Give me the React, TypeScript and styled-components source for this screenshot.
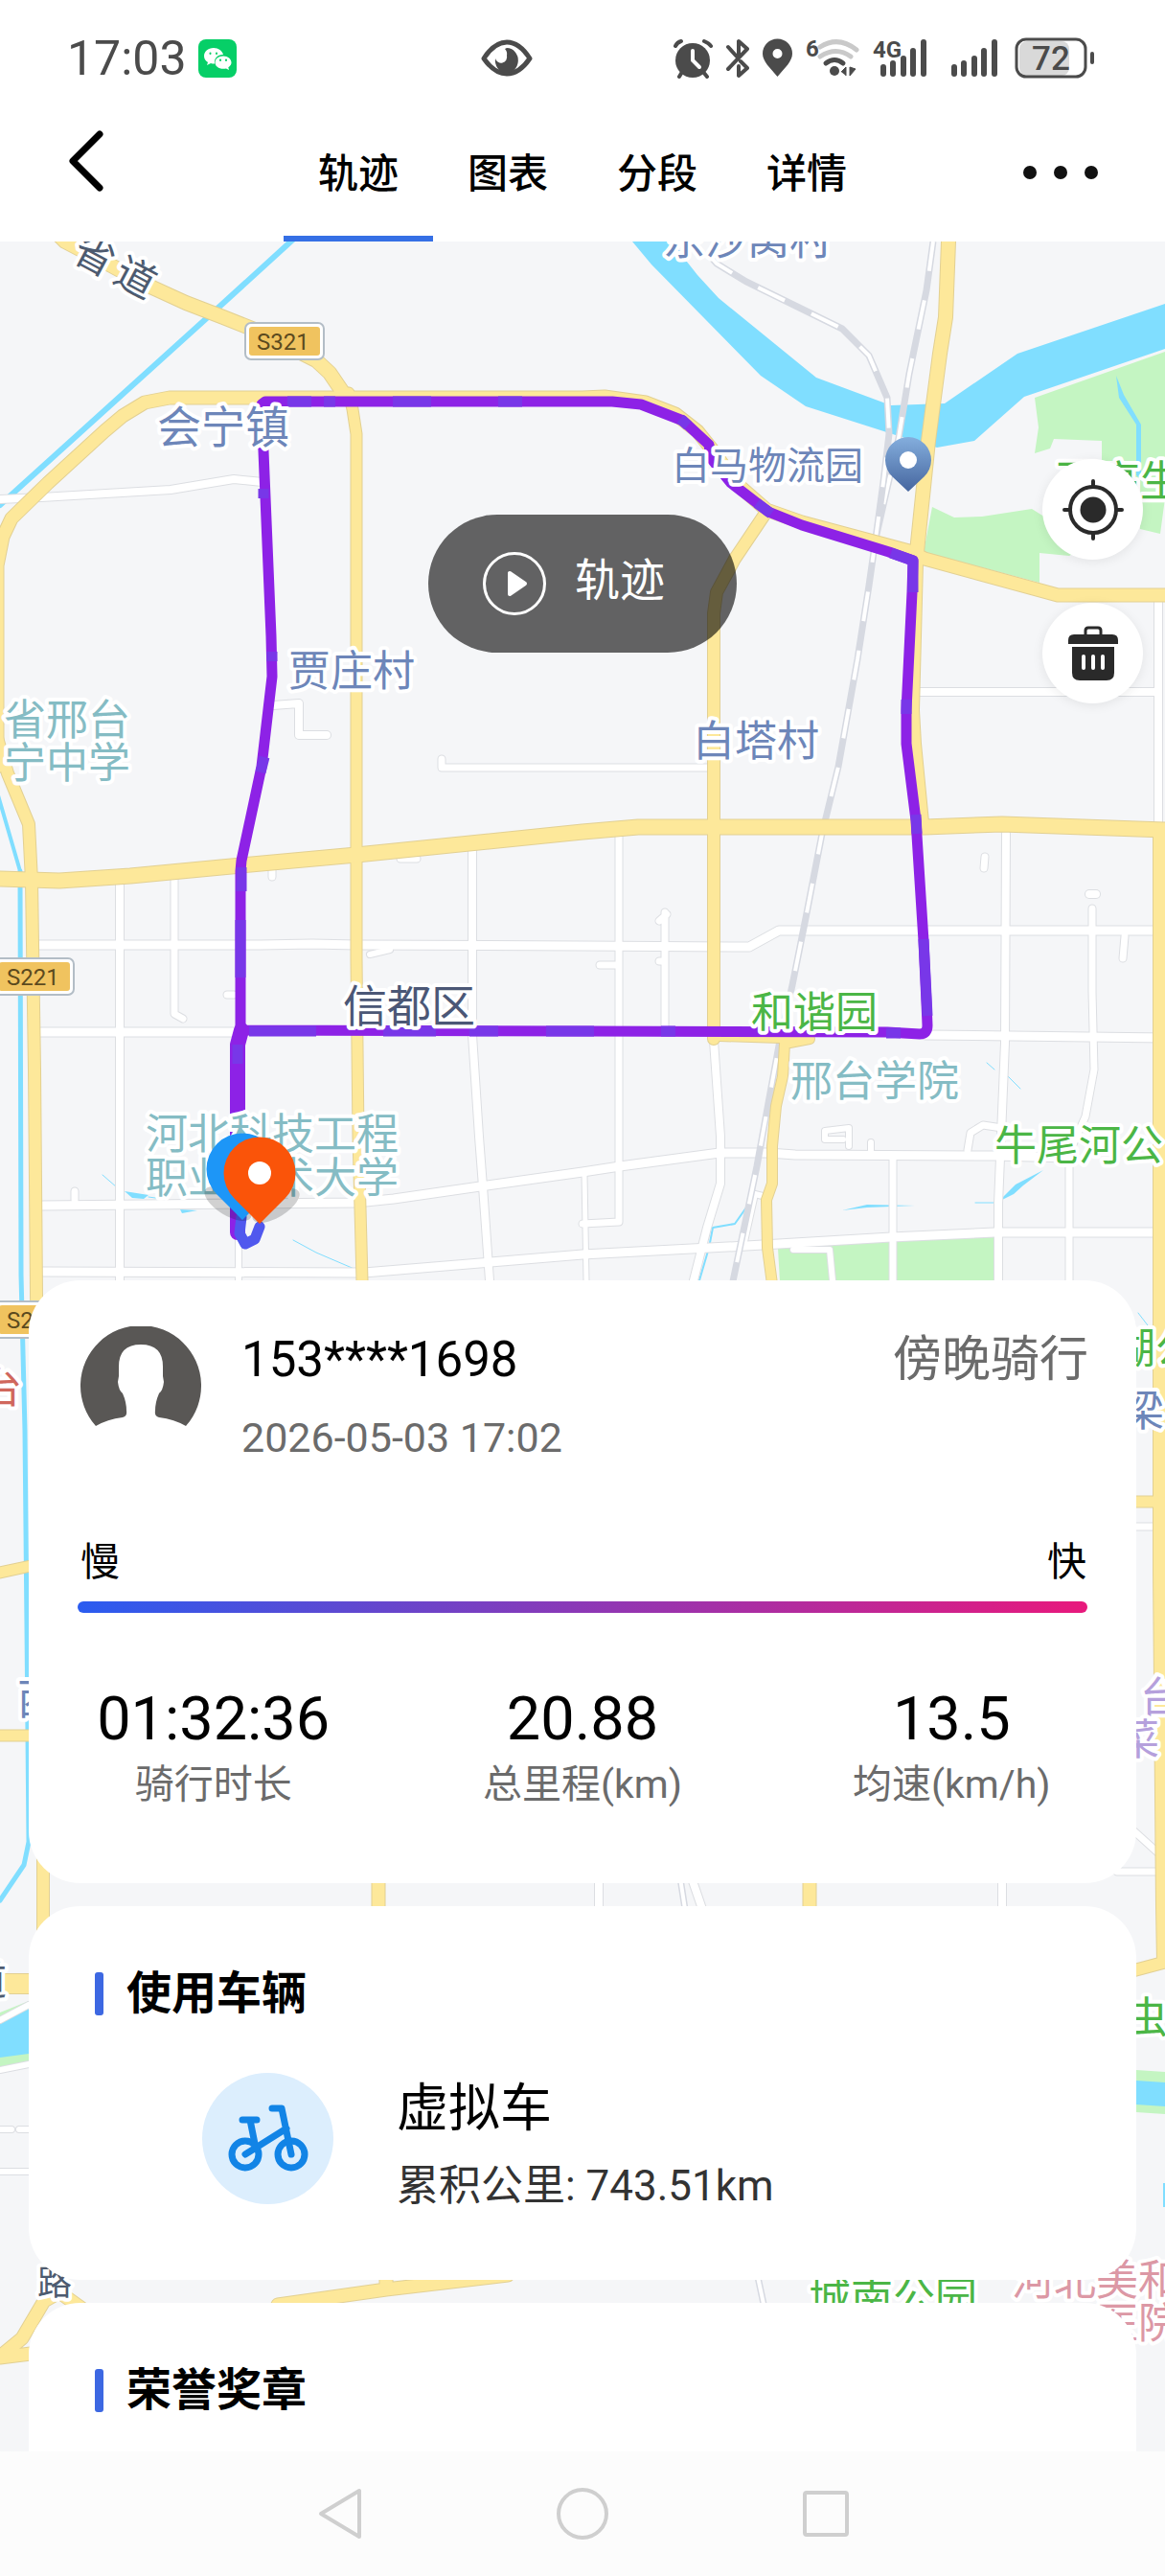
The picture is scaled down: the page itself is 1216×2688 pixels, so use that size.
import { useState } from "react";
import styled, { createGlobalStyle } from "styled-components";

const FONT = `Roboto, "Noto Sans CJK SC", sans-serif`;

const tabs = ["轨迹", "图表", "分段", "详情"];

const stats = [
  { value: "01:32:36", label: "骑行时长" },
  { value: "20.88", label: "总里程(km)" },
  { value: "13.5", label: "均速(km/h)" },
];

type Line = { d: string; w: number };

// 普通道路
const streets: Line[] = [
  { d: "M0 521L43 519L178 511L244 500L274 503", w: 8 },
  { d: "M285 736L312 734V767H341", w: 8 },
  { d: "M461 792V801H740", w: 7 },
  { d: "M125 919V1336", w: 8 },
  { d: "M182 914V1058L191 1063", w: 7 },
  { d: "M493 886V1080L500 1186L504 1238L511 1336", w: 8 },
  { d: "M41 986H272L326 985L372 986L608 987L782 988L813 971H1205", w: 9 },
  { d: "M41 1077H250", w: 9 },
  { d: "M43 1258L372 1255L411 1251L508 1237L608 1223L647 1217L751 1203H802L830 1205L1038 1206L1116 1208", w: 9 },
  { d: "M45 1327L380 1328L512 1317L608 1309L779 1300L930 1291L1038 1286L1205 1286", w: 9 },
  { d: "M249 1291V1336", w: 6 },
  { d: "M646 872V1275L608 1277", w: 7 },
  { d: "M694 952V1074M696 954L688 961M694 1003H688", w: 7 },
  { d: "M745 1086L752 1186V1235L738 1281L724 1336", w: 8 },
  { d: "M610 1226L612 1336", w: 5 },
  { d: "M1050 870L1049 1088L1046 1160L1042 1256V1336", w: 8 },
  { d: "M966 1080L1216 1083", w: 9 },
  { d: "M1140 948V1035L1142 1116L1133 1165L1116 1203V1336", w: 7 },
  { d: "M1137 933H1144", w: 8 },
  { d: "M932 1209V1336", w: 7 },
  { d: "M1209 629V858", w: 8 },
  { d: "M953 722H1205", w: 8 },
  { d: "M1174 977L1172 1000", w: 7 },
  { d: "M886 1196V1177L861 1180V1189H880M909 1192V1200", w: 6 },
  { d: "M1010 1200L1013 1182L1026 1174L1046 1177", w: 7 },
  { d: "M284 907V915M1028 894L1027 906M418 896H435M78 1252V1243M237 1038H244M626 1007H644", w: 7 },
  { d: "M386 996L407 991M828 1304H866L869 1336M776 1300L788 1246L796 1248", w: 6 },
  { d: "M625 1960V1992M722 1960L733 1992M1046 1960V1992", w: 8 },
  { d: "M1184 1911L1216 1940M1166 1953H1216M1186 1593H1212", w: 7 },
  { d: "M0 2108L30 2092M0 2160L30 2154M0 2222H12M20 2222H30M0 2266H30", w: 6 },
];

// 省道与主干道
const mainRoads: Line[] = [
  { d: "M60 244L68 252L116 277L159 300L194 316L233 331L268 345L330 376L344 389L361 414", w: 14 },
  { d: "M-3 800V590L3 560L12 541L50 504L109 450L128 434L151 420L177 415H608L631 414L674 420L705 432L728 450L744 470L767 503L800 532L837 545L949 575L965 583L1104 621H1216", w: 13 },
  { d: "M364 410L368 427L372 453V1000L374 1186L378 1336", w: 11 },
  { d: "M-3 770L8 807L30 860L33 919L36 1116L38 1350L45 1942V2040", w: 12 },
  { d: "M0 917L62 919L136 914L252 903L372 892L608 868L666 863H965L1046 860L1216 866", w: 15 },
  { d: "M800 534L767 583L748 618L745 640V1084", w: 12 },
  { d: "M990 252L987 331L981 369L969 460L958 566L956 587L952 741L954 776L962 858", w: 14 },
  { d: "M1210 866V1640L1213 1989L1214 2048L1184 2056", w: 12 },
  { d: "M751 1081L845 1084L819 1089L817 1123L810 1154L806 1196V1235L800 1252L801 1302L806 1340", w: 10 },
  { d: "M0 1641L32 1634M0 1811H32M1184 1567H1212", w: 11 },
  { d: "M6 2070H32", w: 20 },
  { d: "M395 1950V2000M845 1950V2000M403 2360V2389M290 2405L403 2389L530 2374M0 2459L23 2440L46 2401L62 2392L90 2412M0 2460L32 2456", w: 13 },
];

const river =
  "M660 252L680 276L794 392L841 424L938 455L978 467L1017 460L1069 414L1216 364V317L1062 369L986 421L930 423L852 394L750 311L728 287L713 268L704 252Z";

const parks = [
  "M1080 415L1216 367V520L1211 557L1190 552V500L1150 480V460L1100 458L1096 468L1080 473L1084 446Z",
  "M973 529L996 540L1025 539L1077 531L1093 541L1150 560L1116 580L1085 577V608L964 576Z",
  "M812 1303L1038 1289V1337H814Z",
  "M0 2100L30 2088V2152L0 2158Z",
  "M1186 2160L1216 2162V2206L1186 2204Z",
];

const waters = [
  river,
  "M1165 392L1168 415L1186 443V496L1191 500V443L1173 412Z",
  "M0 2112L30 2096V2143L0 2147Z",
  "M1186 2171L1216 2173V2198L1186 2196Z",
  "M1214 2278H1216V2303H1214Z",
  "M1089 1221L1060 1236L1042 1254L1058 1246L1068 1237Z",
  "M879 1263L905 1257L955 1258L905 1260Z",
  "M130 1243L155 1247L150 1251L138 1250Z",
  "M188 1262L206 1263L190 1266Z",
];

const creeks: Line[] = [
  { d: "M308 248L229 320L0 527", w: 6 },
  { d: "M-2 830L21 909", w: 4 },
  { d: "M21 909L22 1330L26 1493L28 1697L30 1922L25 1946L0 1983", w: 5 },
  { d: "M779 1260L767 1277L744 1281L740 1302L730 1336", w: 2 },
  { d: "M107 1226L122 1239M306 1294L330 1307L372 1325M1030 1109L1038 1116M1052 1123L1065 1136M155 1249L176 1252", w: 1 },
  { d: "M1198 1383L1188 1370M1018 1255H1042", w: 1 },
];

const rails = [
  "M974 252L967 303L949 390L938 457L914 562L907 611L895 688L875 800L858 870L841 958L827 1028L813 1091L802 1151L790 1217L779 1270L765 1337",
  "M740 266L748 275L779 294L879 343L907 371L926 415L928 453L922 503L914 562",
  "M710 1960L715 1992M791 2376L797 2404",
];

const ride =
  "M251 1075V909L252 898L273 800L284 706L283 664L276 495L273 422L277 419L639 419L669 422L713 439L740 464L742 478L763 504L802 534L837 548L928 576L953 585L952 618L946 741V776L956 856L964 982L967 1046L968 1070Q968 1079 960 1079L926 1077L608 1076L256 1075";

// 速度变慢的路段
const slowParts =
  "M300 419H325M338 419H350M410 419H450M520 419H545M275 510V520M284 680V690M276 790L272 806M252 905V930M251 960V1020M260 1076H330M400 1076H455M490 1076H520M570 1076H620M690 1076H705M710 437L718 444M790 525L805 536M930 577L953 585V618M946 730V745M956 850L957 870M964 980L968 1060M248 1090V1110M940 1078H925";

const LABEL = {
  village: "#6d86b9",
  school: "#85bcc4",
  park: "#4bb646",
  road: "#4d5b70",
  district: "#4b5776",
  red: "#d0675c",
  hospital: "#dc98a5",
  purple: "#b5a0dc",
};

const labels: { text: string; x: number; y: number; size: number; color: string; rotate?: number }[] = [
  { text: "省", x: 73, y: 270, size: 42, color: LABEL.road, rotate: 28 },
  { text: "道", x: 116, y: 293, size: 42, color: LABEL.road, rotate: 28 },
  { text: "会宁镇", x: 164, y: 462, size: 46, color: LABEL.village },
  { text: "贾庄村", x: 301, y: 716, size: 44, color: LABEL.village },
  { text: "省邢台", x: 4, y: 767, size: 44, color: LABEL.school },
  { text: "宁中学", x: 4, y: 812, size: 44, color: LABEL.school },
  { text: "东沙窝村", x: 692, y: 266, size: 44, color: LABEL.village },
  { text: "白马物流园", x: 701, y: 500, size: 40, color: LABEL.village },
  { text: "白塔村", x: 723, y: 789, size: 44, color: LABEL.village },
  { text: "百高生", x: 1102, y: 518, size: 44, color: LABEL.park },
  { text: "信都区", x: 358, y: 1066, size: 46, color: LABEL.district },
  { text: "和谐园", x: 784, y: 1072, size: 44, color: LABEL.park },
  { text: "邢台学院", x: 825, y: 1144, size: 44, color: LABEL.school },
  { text: "牛尾河公", x: 1038, y: 1211, size: 44, color: LABEL.park },
  { text: "河北科技工程", x: 152, y: 1199, size: 44, color: LABEL.school },
  { text: "职业技术大学", x: 152, y: 1245, size: 44, color: LABEL.school },
  { text: "台", x: -21, y: 1464, size: 44, color: LABEL.red },
  { text: "西", x: 18, y: 1789, size: 44, color: LABEL.village },
  { text: "湖公", x: 1162, y: 1423, size: 44, color: LABEL.park },
  { text: "梁", x: 1171, y: 1488, size: 44, color: LABEL.village },
  { text: "台", x: 1190, y: 1787, size: 44, color: LABEL.purple },
  { text: "菜", x: 1166, y: 1831, size: 44, color: LABEL.purple },
  { text: "道", x: -35, y: 2082, size: 42, color: LABEL.road },
  { text: "虫", x: 1175, y: 2121, size: 44, color: LABEL.park },
  { text: "路", x: 39, y: 2395, size: 36, color: LABEL.road },
  { text: "城南公园", x: 844, y: 2414, size: 44, color: LABEL.park },
  { text: "河北美和", x: 1056, y: 2395, size: 44, color: LABEL.hospital },
  { text: "医院", x: 1144, y: 2440, size: 44, color: LABEL.hospital },
];

const shields = [
  { text: "S321", x: 256, y: 337, textX: 268 },
  { text: "S221", x: -5, y: 1000, textX: 7 },
  { text: "S222", x: -5, y: 1358, textX: 7 },
];

const RideMap = () => (
  <MapSvg viewBox="0 252 1216 2306" preserveAspectRatio="xMidYMin slice" aria-label="骑行轨迹地图">
    <defs>
      <linearGradient id="poi" x1="0" y1="0" x2="0" y2="1">
        <stop offset="0" stopColor="#84aedd" />
        <stop offset="1" stopColor="#46669f" />
      </linearGradient>
    </defs>
    <rect y="252" width="1216" height="2306" fill="#f5f6f8" />
    {parks.map((d) => (
      <path key={d} d={d} fill="#c4f5c2" />
    ))}
    {waters.map((d) => (
      <path key={d} d={d} fill="#80deff" />
    ))}
    <Lines stroke="#80deff">
      {creeks.map(({ d, w }) => (
        <path key={d} d={d} strokeWidth={w} />
      ))}
    </Lines>
    <Lines stroke="#dcdee2">
      {streets.map(({ d, w }) => (
        <path key={d} d={d} strokeWidth={w + 2} />
      ))}
    </Lines>
    <Lines stroke="#fff">
      {streets.map(({ d, w }) => (
        <path key={d} d={d} strokeWidth={w} />
      ))}
    </Lines>
    {/* 铁路 */}
    {rails.map((d) => (
      <g key={d} fill="none">
        <path d={d} stroke="#d6d9e1" strokeWidth="7" />
        <path d={d} stroke="#fff" strokeWidth="4" strokeDasharray="31 31" />
      </g>
    ))}
    <Lines stroke="#e2d093">
      {mainRoads.map(({ d, w }) => (
        <path key={d} d={d} strokeWidth={w + 2} />
      ))}
    </Lines>
    <Lines stroke="#fde89a">
      {mainRoads.map(({ d, w }) => (
        <path key={d} d={d} strokeWidth={w} />
      ))}
    </Lines>
    {/* 骑行轨迹 */}
    <Lines stroke="#8d22e6">
      <path d={ride} strokeWidth="11" />
      <path d="M252 1075L248 1090V1286" strokeWidth="16" />
      <path d={slowParts} stroke="#7837e8" strokeWidth="11" strokeLinecap="butt" />
      <path d="M252 1270L250 1287L256 1298L266 1293L271 1280" stroke="#5058ee" strokeWidth="11" />
    </Lines>
    {shields.map(({ text, x, y, textX }) => (
      <g key={text}>
        <rect x={x} y={y} width="82" height="38" rx="6" fill="#fff" stroke="#b3bdc6" strokeWidth="2" />
        <rect x={x + 4} y={y + 4} width="74" height="30" rx="3" fill="#f0c35f" />
        <ShieldText x={textX} y={y + 28}>
          {text}
        </ShieldText>
      </g>
    ))}
    {labels.map(({ text, x, y, size, color, rotate }) => (
      <MapLabel
        key={`${text}${y}`}
        x={x}
        y={y}
        fontSize={size}
        fill={color}
        transform={rotate ? `rotate(${rotate} ${x} ${y})` : undefined}
      >
        {text}
      </MapLabel>
    ))}
    <g transform="translate(948 480)">
      <path d="M0 33L-16.5 17.5A24 24 0 1 1 16.5 17.5Z" fill="url(#poi)" />
      <circle r="9" fill="#fff" />
    </g>
    {/* 起点、终点 */}
    <ellipse cx="238" cy="1256" rx="28" ry="12" fill="#000" opacity=".18" transform="rotate(32 238 1256)" />
    <ellipse cx="288" cy="1258" rx="28" ry="12" fill="#000" opacity=".18" transform="rotate(-32 288 1258)" />
    <path transform="translate(253 1220)" d="M0 53L-26.5 26.5A37.5 37.5 0 1 1 26.5 26.5Z" fill="#1d96f7" />
    <g transform="translate(271 1224)">
      <path d="M0 53L-26.5 26.5A37.5 37.5 0 1 1 26.5 26.5Z" fill="#fa5409" />
      <circle r="12" fill="#fff" />
    </g>
  </MapSvg>
);

const SignalBars = ({ label }: { label?: string }) => (
  <svg width="60" height="44" viewBox="0 0 60 44">
    {label && (
      <SignalText x="0" y="21">
        {label}
      </SignalText>
    )}
    <path d="M11 31V38M21 27V38M32 22V38M42 14V38M53 5V38" stroke="#4b4b4b" strokeWidth="6" strokeLinecap="round" />
  </svg>
);

const StatusIcons = () => (
  <StatusRight>
    <svg width="41" height="44" viewBox="0 0 41 44" fill="none" stroke="#4b4b4b" strokeLinecap="round">
      <circle cx="20" cy="24" r="18" fill="#4b4b4b" stroke="none" />
      <path d="M2 9Q4 5 8 4M32 4Q37 6 39 9M9 36L6 41M31 36L35 41" strokeWidth="4" />
      <path d="M20 14V24L27 31" stroke="#fff" strokeWidth="4" />
    </svg>
    <svg width="24" height="44" viewBox="1 0 24 44" fill="none" stroke="#4b4b4b" strokeWidth="4" strokeLinecap="round" strokeLinejoin="round">
      <path d="M3 10L12 20M3 33L23 12L14 4V18M16 25L23 32L14 40V30" />
    </svg>
    <svg width="31" height="44" viewBox="0 0 31 44">
      <path fillRule="evenodd" fill="#4b4b4b" d="M15.500 41C8 32 0 25 0 17a15.500 15.500 0 0 1 31 0C31 25 23 32 15.500 41ZM15.500 22a5 5 0 1 0 0-10a5 5 0 0 0 0 10Z" />
    </svg>
    <svg width="56" height="44" viewBox="0 0 56 44" fill="none" strokeLinecap="round">
      <SignalText x="0" y="20">
        6
      </SignalText>
      <path d="M15 10Q34 -2 53 13M15 20Q32 9 47 20" stroke="#c9c9c9" strokeWidth="5" />
      <path d="M21 27Q30 20 39 27" stroke="#4b4b4b" strokeWidth="5" />
      <circle cx="30" cy="35" r="5" fill="#4b4b4b" />
      <path d="M37 36L42 31V40M46 31V40L52 33Z" stroke="#4b4b4b" strokeWidth="1" fill="#4b4b4b" strokeLinecap="butt" />
    </svg>
    <SignalBars label="4G" />
    <SignalBars />
    <svg width="84" height="44" viewBox="0 0 84 44">
      <rect x="5" y="4" width="52" height="36" rx="8" fill="#d9d9d9" />
      <rect x="2" y="2" width="72" height="39" rx="10" fill="none" stroke="#4b4b4b" strokeWidth="3" />
      <path d="M81 17V26" stroke="#4b4b4b" strokeWidth="4" strokeLinecap="round" />
      <BatteryText x="38" y="34">
        72
      </BatteryText>
    </svg>
  </StatusRight>
);

const App = () => {
  const [active, setActive] = useState("轨迹");

  return (
    <>
      <GlobalStyle />
      <Page>
        {/* 系统状态栏 */}
        <StatusBar>
          <Clock>17:03</Clock>
          <svg width="40" height="40" viewBox="0 0 40 40">
            <rect width="40" height="40" rx="8" fill="#06cf67" />
            <path fill="#fff" d="M16 9c-6 0-10 4-10 8.500 0 3 1.500 5 4 6.500l-1 3 4-2q2 .6 4 .5c-1-6 4-10 9-9.500C25 12 21 9 16 9Z" />
            <path fill="#fff" d="M26 17.500c-5 0-8.500 3.200-8.500 6.700s3.500 6.600 8.500 6.600q1.500 0 3-.4l3 1.600-.7-2.800c2-1.300 3.200-3 3.200-5 0-3.500-3.500-6.700-8.500-6.700Z" />
            <path stroke="#06cf67" strokeWidth="2" strokeLinecap="round" d="M12.500 14.500v.5M19 14.500v.5M23 21.500v.4M29 21.500v.4" />
          </svg>
          <Eye width="54" height="44" viewBox="0 0 54 44">
            <path d="M3 22Q14 5 27 5T51 22Q40 38 27 38T3 22Z" fill="none" stroke="#4b4b4b" strokeWidth="5" strokeLinejoin="round" />
            <path d="M27 11a12 13 0 1 1-12 11a6 6 0 0 0 12-3a8 8 0 0 0-2-7Z" fill="#4b4b4b" />
          </Eye>
          <StatusIcons />
        </StatusBar>

        <Header>
          <BackButton aria-label="返回">
            <svg width="40" height="68" viewBox="0 0 40 68" fill="none" stroke="#000" strokeWidth="7" strokeLinecap="round" strokeLinejoin="round">
              <path d="M34 6L6 34L34 62" />
            </svg>
          </BackButton>
          <Tabs>
            {tabs.map((tab) => (
              <Tab key={tab} $active={tab === active} onClick={() => setActive(tab)}>
                {tab}
              </Tab>
            ))}
          </Tabs>
          <MoreButton aria-label="更多">
            <Dot />
            <Dot />
            <Dot />
          </MoreButton>
        </Header>

        <Main>
          <RideMap />
          <MapStage>
            <PlayButton>
              <svg width="66" height="66" viewBox="0 0 66 66">
                <circle cx="33" cy="33" r="31.500" fill="none" stroke="#fff" strokeWidth="3" />
                <path d="M28 22V44L44 33Z" fill="#fff" stroke="#fff" strokeWidth="4" strokeLinejoin="round" />
              </svg>
              <PlayText>轨迹</PlayText>
            </PlayButton>
            <Controls>
              <RoundButton aria-label="定位">
                <svg width="66" height="66" viewBox="0 0 66 66" fill="none" stroke="#2a2a2a" strokeWidth="4" strokeLinecap="round">
                  <circle cx="33" cy="33" r="24" />
                  <circle cx="33" cy="33" r="13.500" fill="#2a2a2a" stroke="none" />
                  <path d="M33 3V9M33 57V63M3 33H9M57 33H63" />
                </svg>
              </RoundButton>
              <RoundButton aria-label="删除">
                <svg width="52" height="58" viewBox="0 0 52 58" fill="#2a2a2a">
                  <path d="M18 10V5q0-3 3-3H31q3 0 3 3V10" fill="none" stroke="#2a2a2a" strokeWidth="3" />
                  <path d="M0 19V15q0-6 6-6H46q6 0 6 6V19ZM4 22H48V49q0 8-8 8H12q-8 0-8-8Z" />
                  <path d="M16 32V44M26 32V44M36 32V44" stroke="#fff" strokeWidth="4" strokeLinecap="round" />
                </svg>
              </RoundButton>
            </Controls>
          </MapStage>

          <Sheet>
            {/* 骑行概要 */}
            <SummaryCard>
              <Rider>
                <svg width="126" height="126" viewBox="0 0 126 126">
                  <path d="M16 104A63 63 0 1 1 110 104Q98 97 82 95Q77 94 78 88Q78 79 82 70Q86 67 87 58L86 52V42Q86 19 63 19Q40 19 40 42V52L39 58Q40 67 44 70Q48 79 48 88Q49 94 44 95Q28 97 16 104Z" fill="#595755" />
                </svg>
                <RiderInfo>
                  <RiderName>153****1698</RiderName>
                  <RideTime>2026-05-03 17:02</RideTime>
                </RiderInfo>
                <RideTitle>傍晚骑行</RideTitle>
              </Rider>
              <SpeedScale>
                <SpeedEnds>
                  <span>慢</span>
                  <span>快</span>
                </SpeedEnds>
                <SpeedBar />
              </SpeedScale>
              <Stats>
                {stats.map(({ value, label }) => (
                  <Stat key={label}>
                    <StatLabel>{label}</StatLabel>
                    <StatValue>{value}</StatValue>
                  </Stat>
                ))}
              </Stats>
            </SummaryCard>

            {/* 使用车辆 */}
            <Card>
              <CardTitle>使用车辆</CardTitle>
              <Bike>
                <BikeIcon>
                  <svg width="84" height="74" viewBox="0 0 84 74" fill="none" stroke="#1284e6" strokeWidth="7" strokeLinecap="round" strokeLinejoin="round">
                    <circle cx="18" cy="53" r="14" />
                    <circle cx="66" cy="53" r="14" />
                    <path d="M15 17H30M23 17L29 47M18 53L61 26M46 5H56L66 53" />
                  </svg>
                </BikeIcon>
                <BikeInfo>
                  <BikeName>虚拟车</BikeName>
                  <BikeDistance>累积公里: 743.51km</BikeDistance>
                </BikeInfo>
              </Bike>
            </Card>

            <LastCard>
              <CardTitle>荣誉奖章</CardTitle>
            </LastCard>
          </Sheet>
        </Main>

        {/* 系统导航键 */}
        <NavBar>
          <NavButton aria-label="系统返回">
            <svg width="54" height="58" viewBox="0 0 54 58">
              <path d="M7 29L47 5V53Z" />
            </svg>
          </NavButton>
          <NavButton aria-label="主页">
            <svg width="54" height="58" viewBox="0 0 54 58">
              <circle cx="27" cy="29" r="25" />
            </svg>
          </NavButton>
          <NavButton aria-label="最近任务">
            <svg width="54" height="58" viewBox="0 0 54 58">
              <rect x="5" y="7" width="44" height="44" rx="2" />
            </svg>
          </NavButton>
        </NavBar>
      </Page>
    </>
  );
};

export default App;

const GlobalStyle = createGlobalStyle`
  * {
    box-sizing: border-box;
  }
  body {
    margin: 0;
    font-family: ${FONT};
    color: #000;
  }
  button {
    padding: 0;
    border: 0;
    background: none;
    font: inherit;
    color: inherit;
    cursor: pointer;
  }
  svg {
    display: block;
    flex-shrink: 0;
  }
`;

const Page = styled.div`
  display: flex;
  flex-direction: column;
  height: 100vh;
  overflow: hidden;
  background-color: #fff;
`;

const StatusBar = styled.div`
  display: flex;
  align-items: center;
  height: 108px;
  padding: 14px 73px 0 70px;
  color: #4b4b4b;
`;

const Clock = styled.div`
  font-size: 50px;
  margin-right: 12px;
`;

const Eye = styled.svg`
  margin-left: 21vw;
`;

const StatusRight = styled.div`
  display: flex;
  gap: 14px;
  margin-left: auto;
`;

const SignalText = styled.text`
  font-size: 24px;
  font-weight: 700;
  fill: #4b4b4b;
  stroke: none;
`;

const BatteryText = styled.text`
  font-size: 35px;
  font-weight: 500;
  text-anchor: middle;
  fill: #4b4b4b;
`;

const Header = styled.header`
  display: grid;
  grid-template-columns: 1fr auto 1fr;
  height: 144px;
  padding: 0 70px;
`;

const BackButton = styled.button`
  justify-self: start;
  padding-bottom: 24px;
`;

const Tabs = styled.nav`
  display: flex;
`;

const Tab = styled.button<{ $active: boolean }>`
  width: 156px;
  border-bottom: 6px solid ${(props) => (props.$active ? "#356fe5" : "transparent")};
  font-size: 42px;
  font-weight: 500;
`;

const MoreButton = styled.button`
  display: flex;
  align-items: center;
  justify-self: end;
  gap: 18px;
`;

const Dot = styled.span`
  width: 14px;
  height: 14px;
  border-radius: 50%;
  background-color: #111;
`;

const Main = styled.main`
  position: relative;
  display: flex;
  flex-direction: column;
  flex: 1;
  min-height: 0;
  overflow: hidden;
`;

const MapSvg = styled.svg`
  position: absolute;
  inset: 0;
  width: 100%;
  height: 100%;
`;

const Lines = styled.g`
  fill: none;
  stroke-linejoin: round;
  stroke-linecap: round;
`;

const MapLabel = styled.text`
  font-family: "Noto Sans CJK SC", sans-serif;
  paint-order: stroke;
  stroke: #fff;
  stroke-width: 8px;
  stroke-linejoin: round;
`;

const ShieldText = styled.text`
  font-size: 24px;
  fill: #5c4a1e;
`;

const MapStage = styled.section`
  position: relative;
  display: flex;
  align-items: flex-start;
  justify-content: center;
  flex-shrink: 0;
  height: 1084px;
  padding-top: 285px;
`;

const PlayButton = styled.button`
  display: flex;
  align-items: center;
  gap: 30px;
  height: 144px;
  padding: 0 75px 0 57px;
  border-radius: 72px;
  background-color: rgba(0, 0, 0, 0.6);
  color: #fff;
`;

const PlayText = styled.span`
  padding-bottom: 6px;
  font-size: 47px;
  line-height: 60px;
`;

// 地图右侧悬浮按钮
const Controls = styled.div`
  position: absolute;
  top: 227px;
  right: 23px;
  display: grid;
  gap: 45px;
`;

const RoundButton = styled.button`
  display: grid;
  place-items: center;
  width: 105px;
  height: 105px;
  border-radius: 50%;
  background-color: #fff;
  box-shadow: 0 2px 12px rgba(0, 0, 0, 0.08);
`;

const Sheet = styled.div`
  position: relative;
  display: flex;
  flex-direction: column;
  flex: 1;
  gap: 24px;
  padding: 0 30px;
`;

const Card = styled.section`
  padding: 56px 54px;
  border-radius: 54px;
  background-color: #fff;
`;

const SummaryCard = styled(Card)`
  padding: 48px 0 73px;
`;

const LastCard = styled(Card)`
  flex: 1;
  border-radius: 54px 54px 0 0;
`;

const Rider = styled.div`
  display: flex;
  align-items: flex-start;
  padding: 0 50px 0 54px;
`;

const RiderInfo = styled.div`
  flex: 1;
  margin-left: 42px;
`;

const RiderName = styled.div`
  font-size: 51px;
  line-height: 70px;
`;

const RideTime = styled.div`
  margin-top: 16px;
  color: #6b6b6b;
  font-size: 43px;
  line-height: 60px;
`;

const RideTitle = styled.div`
  color: #6b6b6b;
  font-size: 51px;
  line-height: 70px;
`;

const SpeedScale = styled.div`
  padding: 0 51px;
  margin-top: 70px;
`;

const SpeedEnds = styled.div`
  display: flex;
  justify-content: space-between;
  padding: 0 1px 0 3px;
  font-size: 41px;
  line-height: 60px;
`;

const SpeedBar = styled.div`
  height: 12px;
  margin-top: 11px;
  border-radius: 6px;
  background: linear-gradient(90deg, #2a5cf0, #8c38b6 50%, #e8197c);
`;

const Stats = styled.dl`
  display: grid;
  grid-template-columns: repeat(3, 1fr);
  margin: 73px 0 0;
  text-align: center;
`;

const Stat = styled.div`
  display: flex;
  flex-direction: column-reverse;
`;

const StatValue = styled.dd`
  margin: 0;
  font-size: 63px;
  line-height: 76px;
`;

const StatLabel = styled.dt`
  color: #6b6b6b;
  font-size: 41px;
  line-height: 60px;
`;

const CardTitle = styled.h2`
  display: flex;
  align-items: center;
  gap: 24px;
  margin: 0;
  padding-left: 15px;
  font-size: 47px;
  font-weight: 700;
  line-height: 70px;

  &::before {
    content: "";
    width: 9px;
    height: 45px;
    border-radius: 3px;
    background-color: #3d68e2;
  }
`;

const Bike = styled.div`
  display: flex;
  align-items: flex-start;
  gap: 66px;
  margin-top: 48px;
  padding-left: 127px;
`;

const BikeIcon = styled.div`
  display: grid;
  place-items: center;
  width: 137px;
  height: 137px;
  border-radius: 50%;
  background-color: #dceefd;
`;

const BikeInfo = styled.div`
  display: grid;
`;

const BikeName = styled.div`
  font-size: 54px;
  line-height: 76px;
`;

const BikeDistance = styled.div`
  color: #333;
  font-size: 44px;
  line-height: 84px;
`;

const NavBar = styled.footer`
  display: flex;
  justify-content: space-evenly;
  flex-shrink: 0;
  height: 130px;
  padding: 0 128px;
  background-color: #fcfcfc;
`;

const NavButton = styled.button`
  svg {
    fill: none;
    stroke: #cfcfcf;
    stroke-width: 4px;
    stroke-linejoin: round;
  }
`;
